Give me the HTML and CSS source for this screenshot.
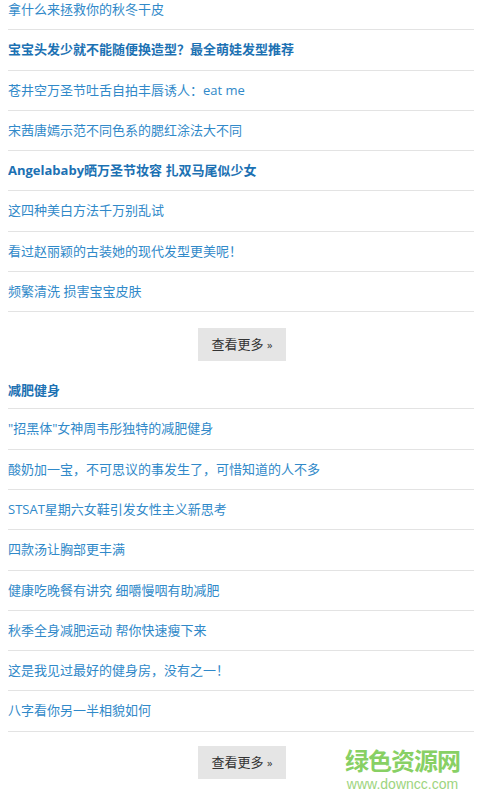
FILE: index.html
```html
<!DOCTYPE html>
<html lang="zh-CN">
<head>
    <meta charset="UTF-8">
    <meta name="viewport" content="width=device-width, initial-scale=1.0">
    <title>美容资讯</title>
    <link rel="stylesheet" href="styles.css">
</head>
<body>

<div class="page">
    <!-- 美容护肤 -->
    <ul class="news-list first">
        <li><a href="#">拿什么来拯救你的秋冬干皮</a></li>
        <li><a href="#" class="hot">宝宝头发少就不能随便换造型？最全萌娃发型推荐</a></li>
        <li><a href="#">苍井空万圣节吐舌自拍丰唇诱人：eat me</a></li>
        <li><a href="#">宋茜唐嫣示范不同色系的腮红涂法大不同</a></li>
        <li><a href="#" class="hot">Angelababy晒万圣节妆容 扎双马尾似少女</a></li>
        <li><a href="#">这四种美白方法千万别乱试</a></li>
        <li><a href="#">看过赵丽颖的古装她的现代发型更美呢！</a></li>
        <li><a href="#">频繁清洗 损害宝宝皮肤</a></li>
    </ul>
    <div class="more"><a href="#">查看更多 <span>»</span></a></div>

    <!-- 减肥健身 -->
    <h3 class="section-title">减肥健身</h3>
    <ul class="news-list">
        <li><a href="#">"招黑体"女神周韦彤独特的减肥健身</a></li>
        <li><a href="#">酸奶加一宝，不可思议的事发生了，可惜知道的人不多</a></li>
        <li><a href="#">STSAT星期六女鞋引发女性主义新思考</a></li>
        <li><a href="#">四款汤让胸部更丰满</a></li>
        <li><a href="#">健康吃晚餐有讲究 细嚼慢咽有助减肥</a></li>
        <li><a href="#">秋季全身减肥运动 帮你快速瘦下来</a></li>
        <li><a href="#">这是我见过最好的健身房，没有之一！</a></li>
        <li><a href="#">八字看你另一半相貌如何</a></li>
    </ul>
    <div class="more last"><a href="#">查看更多 <span>»</span></a></div>
</div>

<div class="watermark">
    <div class="wm-name">绿色资源网</div>
    <div class="wm-url">www.downcc.com</div>
</div>

</body>
</html>
```

FILE: styles.css
```css
body {
    font-family: "Open Sans", "Noto Sans CJK SC", sans-serif;
    font-size: 13px;
    margin: 0;
    padding: 0;
    background-color: #fff;
    overflow: hidden;
}

.page {
    padding: 0 6px 0 8px;
}

.news-list {
    list-style-type: none;
    margin: 0;
    padding: 0;
}

.news-list.first {
    margin-top: -10px;
}

.news-list li {
    height: 39.3px;
    line-height: 39.3px;
    border-bottom: 1px solid #e3e3e3;
    white-space: nowrap;
    overflow: hidden;
}

.news-list a {
    color: #3089c9;
    text-decoration: none;
}

.news-list a.hot {
    color: #1c71b3;
    font-weight: bold;
}

.more {
    text-align: center;
    padding: 16px 0 11px;
}

.more.last {
    padding-top: 14px;
}

.more a {
    display: inline-block;
    width: 88px;
    height: 33px;
    line-height: 33px;
    background-color: #e5e5e5;
    color: #333;
    text-decoration: none;
    margin-left: 2px;
}

.more span {
    font-size: 11px;
}

.section-title {
    margin: 0;
    height: 36px;
    line-height: 36px;
    font-size: 13px;
    color: #1c71b3;
    font-weight: bold;
    border-bottom: 1px solid #e3e3e3;
}

.watermark {
    position: absolute;
    left: 345px;
    top: 744px;
    text-align: center;
    font-family: "Noto Sans CJK SC", sans-serif;
}

.wm-name {
    font-size: 24px;
    line-height: 32px;
    letter-spacing: -1px;
    color: #88d064;
    font-weight: bold;
}

.wm-url {
    font-family: "Liberation Sans", Arial, sans-serif;
    font-size: 14px;
    line-height: 16px;
    color: #9dd47e;
}
```
